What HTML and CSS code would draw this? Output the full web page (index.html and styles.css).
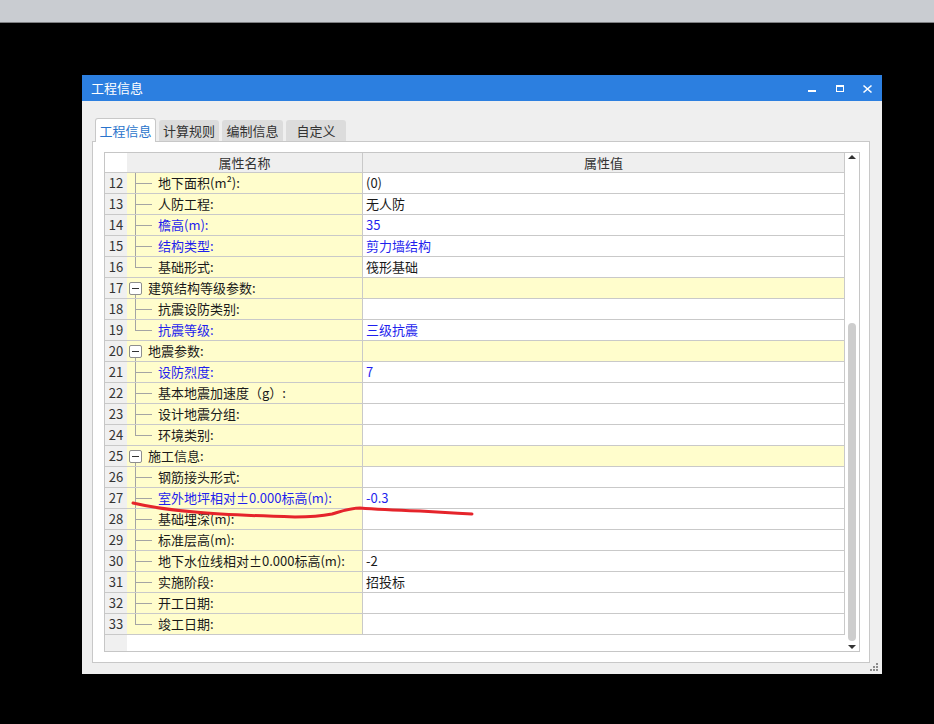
FILE: index.html
```html
<!DOCTYPE html>
<html lang="zh">
<head>
<meta charset="utf-8">
<title>工程信息</title>
<link rel="stylesheet" href="styles.css">
</head>
<body>
<div class="topbar"></div>
<div class="window">
  <div class="titlebar">
    <span class="title">工程信息</span>
    <div class="controls">
      <svg class="ctl" width="28" height="26" viewBox="0 0 28 26"><rect x="10" y="15" width="8" height="2" fill="#fff"/></svg>
      <svg class="ctl" width="28" height="26" viewBox="0 0 28 26"><rect x="10.5" y="10.5" width="7" height="6" fill="none" stroke="#fff"/><rect x="10" y="10" width="8" height="2" fill="#fff"/></svg>
      <svg class="ctl" width="28" height="26" viewBox="0 0 28 26"><path d="M9.5 10.5 L17.5 17.5 M17.5 10.5 L9.5 17.5" stroke="#fff" stroke-width="1.6" fill="none"/></svg>
    </div>
  </div>
  <div class="wbody">
    <div class="tabs">
      <div class="tab active">工程信息</div>
      <div class="tab">计算规则</div>
      <div class="tab w61">编制信息</div>
      <div class="tab">自定义</div>
    </div>
    <div class="panel">
      <div class="grid">
        <div class="table">
          <div class="row head"><div class="num"></div><div class="name">属性名称</div><div class="val">属性值</div></div>
          <div class="row child"><div class="num">12</div><div class="name">地下面积(m²):</div><div class="val">(0)</div></div>
          <div class="row child"><div class="num">13</div><div class="name">人防工程:</div><div class="val">无人防</div></div>
          <div class="row child blue"><div class="num">14</div><div class="name">檐高(m):</div><div class="val">35</div></div>
          <div class="row child blue"><div class="num">15</div><div class="name">结构类型:</div><div class="val">剪力墙结构</div></div>
          <div class="row child last"><div class="num">16</div><div class="name">基础形式:</div><div class="val">筏形基础</div></div>
          <div class="row group"><div class="num">17</div><div class="name"><span class="tog"></span>建筑结构等级参数:</div><div class="val"></div></div>
          <div class="row child"><div class="num">18</div><div class="name">抗震设防类别:</div><div class="val"></div></div>
          <div class="row child last blue"><div class="num">19</div><div class="name">抗震等级:</div><div class="val">三级抗震</div></div>
          <div class="row group"><div class="num">20</div><div class="name"><span class="tog"></span>地震参数:</div><div class="val"></div></div>
          <div class="row child blue"><div class="num">21</div><div class="name">设防烈度:</div><div class="val">7</div></div>
          <div class="row child"><div class="num">22</div><div class="name">基本地震加速度（g）:</div><div class="val"></div></div>
          <div class="row child"><div class="num">23</div><div class="name">设计地震分组:</div><div class="val"></div></div>
          <div class="row child last"><div class="num">24</div><div class="name">环境类别:</div><div class="val"></div></div>
          <div class="row group"><div class="num">25</div><div class="name"><span class="tog"></span>施工信息:</div><div class="val"></div></div>
          <div class="row child"><div class="num">26</div><div class="name">钢筋接头形式:</div><div class="val"></div></div>
          <div class="row child blue"><div class="num">27</div><div class="name">室外地坪相对±0.000标高(m):</div><div class="val">-0.3</div></div>
          <div class="row child"><div class="num">28</div><div class="name">基础埋深(m):</div><div class="val"></div></div>
          <div class="row child"><div class="num">29</div><div class="name">标准层高(m):</div><div class="val"></div></div>
          <div class="row child"><div class="num">30</div><div class="name">地下水位线相对±0.000标高(m):</div><div class="val">-2</div></div>
          <div class="row child"><div class="num">31</div><div class="name">实施阶段:</div><div class="val">招投标</div></div>
          <div class="row child"><div class="num">32</div><div class="name">开工日期:</div><div class="val"></div></div>
          <div class="row child last"><div class="num">33</div><div class="name">竣工日期:</div><div class="val"></div></div>
          <div class="filler"></div>
        </div>
        <div class="sb">
          <span class="arr up"></span>
          <div class="track"><div class="thumb"></div></div>
          <span class="arr down"></span>
        </div>
      </div>
    </div>
    <svg class="grip" width="9" height="9" viewBox="0 0 9 9">
      <rect x="6" y="0" width="2" height="2" fill="#8c8c8c"/>
      <rect x="3" y="3" width="2" height="2" fill="#8c8c8c"/><rect x="6" y="3" width="2" height="2" fill="#8c8c8c"/>
      <rect x="0" y="6" width="2" height="2" fill="#8c8c8c"/><rect x="3" y="6" width="2" height="2" fill="#8c8c8c"/><rect x="6" y="6" width="2" height="2" fill="#8c8c8c"/>
    </svg>
  </div>
</div>
<svg class="scribble" width="934" height="724" viewBox="0 0 934 724">
  <path d="M133 503 C150 507 170 510 195 512 C225 515 260 516 295 517 C312 517 322 516 332 514 C342 511 350 508 360 508 C372 509 390 510 420 511 C440 512 455 513 472 514" fill="none" stroke="#e5242b" stroke-width="3" stroke-linecap="round" stroke-linejoin="round"/>
</svg>
</body>
</html>
```
FILE: styles.css
```css
* { box-sizing: border-box; }
html, body { margin: 0; padding: 0; }
body {
  background: #000;
  width: 934px;
  height: 724px;
  overflow: hidden;
  position: relative;
  font-family: "Noto Sans CJK SC", "Microsoft YaHei", sans-serif;
  font-size: 13px;
  color: #1a1a1a;
}
.topbar {
  height: 23px;
  background: #c9ccd1;
  border-bottom: 1px solid #7e7f82;
}
.window {
  margin: 52px 0 0 82px;
  width: 800px;
  height: 599px;
  display: flex;
  flex-direction: column;
}
.titlebar {
  height: 26px;
  background: #2c7fe0;
  display: flex;
  align-items: center;
  justify-content: space-between;
  color: #fff;
}
.title { padding-left: 9px; line-height: 26px; font-size: 13px; }
.controls { display: flex; height: 26px; }
.ctl { display: block; }
.wbody {
  flex: 1;
  background: #efefef;
  padding: 17px 12px 11px 10px;
  position: relative;
}
.tabs {
  display: flex;
  align-items: flex-end;
  gap: 3px;
  height: 23px;
  padding-left: 3px;
  position: relative;
  z-index: 2;
}
.tab {
  width: 60px;
  height: 21px;
  background: #dcdcdc;
  border-radius: 3px 3px 0 0;
  color: #333;
  text-align: center;
  line-height: 21px;
  font-size: 13px;
}
.tab.w61 { width: 61px; }
.tab.active {
  width: 61px;
  height: 24px;
  margin-bottom: -1px;
  background: #fff;
  border: 1px solid #c8c8c8;
  border-bottom: none;
  color: #2a74cc;
  line-height: 23px;
}
.panel {
  height: 522px;
  background: #fff;
  border: 1px solid #c8c8c8;
  padding: 10px 9px 10px 11px;
}
.grid {
  height: 500px;
  border: 1px solid #c6c6c6;
  display: flex;
}
.table {
  width: 740px;
  display: flex;
  flex-direction: column;
}
.row {
  display: grid;
  grid-template-columns: 22px 236px 482px;
  height: 21px;
  border-bottom: 1px solid #c9c9c9;
  line-height: 20px;
}
.row > div { height: 20px; white-space: nowrap; overflow: hidden; }
.num {
  background: #f0f0f0;
  text-align: center;
  color: #333;
  font-size: 13px;
}
.name {
  background-color: #fffdcc;
  border-right: 1px solid #c9c9c9;
  display: flex;
  align-items: center;
}
.val {
  background: #fff;
  border-right: 1px solid #c9c9c9;
  padding-left: 3px;
}
.head { height: 20px; }
.head > div { height: 19px; line-height: 19px; }
.head .num { background: #fff; }
.head .name { background: #efefef; justify-content: center; color: #333; }
.head .val { background: #efefef; text-align: center; color: #333; padding-left: 0; }
.child .name {
  padding-left: 31px;
  background-image: linear-gradient(#a4a4a4, #a4a4a4), linear-gradient(#a4a4a4, #a4a4a4);
  background-repeat: no-repeat;
  background-position: 8px 0, 9px 10px;
  background-size: 1px 100%, 16px 1px;
}
.child.last .name { background-size: 1px 11px, 16px 1px; }
.group .name {
  background-image: linear-gradient(#a4a4a4, #a4a4a4);
  background-repeat: no-repeat;
  background-position: 8px 100%;
  background-size: 1px 4px;
}
.group .val { background: #fffdcc; }
.tog {
  width: 13px;
  height: 13px;
  margin-left: 2px;
  margin-right: 6px;
  border: 1px solid #8e8e8e;
  border-radius: 2px;
  background: #fff;
  display: flex;
  align-items: center;
  justify-content: center;
}
.tog::before {
  content: "";
  width: 7px;
  height: 1px;
  background: #333;
}
.blue .name, .blue .val { color: #1f1fee; }
.filler {
  flex: 1;
  background: linear-gradient(to right, #f0f0f0 22px, #fff 22px);
}
.sb {
  width: 14px;
  display: flex;
  flex-direction: column;
  align-items: center;
  padding: 2px 0;
  background: #fff;
}
.arr { width: 0; height: 0; border-left: 4px solid transparent; border-right: 4px solid transparent; }
.arr.up { border-bottom: 4px solid #333; }
.arr.down { border-top: 4px solid #333; margin-top: 4px; }
.track { padding-top: 164px; }
.thumb {
  width: 8px;
  height: 318px;
  border-radius: 4px;
  background: #cdcdcd;
}
.grip { position: absolute; right: 3px; bottom: 2px; }
.scribble { position: absolute; left: 0; top: 0; pointer-events: none; }
```
